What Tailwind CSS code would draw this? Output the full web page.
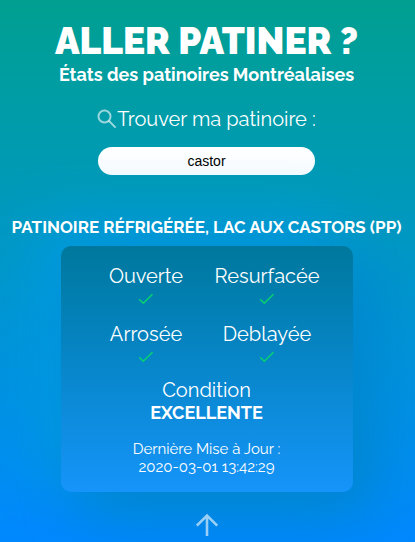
<!DOCTYPE html>
<html lang="fr">
<head>
<meta charset="utf-8">
<meta name="viewport" content="width=device-width, initial-scale=1">
<title>Aller patiner ?</title>
<script src="https://cdn.jsdelivr.net/npm/@tailwindcss/browser@4"></script>
</head>
<body class="min-h-screen overflow-x-hidden bg-linear-to-b from-[#009f90] to-[#0088ff] font-['Raleway','Inter',sans-serif] text-center text-white">
<div class="flex min-h-screen flex-col items-center pt-5 pr-0.5">
  <header>
    <h1 class="text-[37px] leading-[43px] font-black">ALLER PATINER ?</h1>
    <p class="text-lg leading-6 font-bold">États des patinoires Montréalaises</p>
  </header>

  <form class="mt-5 flex flex-col items-center">
    <label for="rink" class="flex items-center text-xl leading-6">
      <svg class="size-5" viewBox="0 0 20 20" fill="none" stroke="#fff" stroke-opacity=".6" stroke-width="2" aria-hidden="true"><circle cx="7.5" cy="7.5" r="6"/><path d="M11.8 11.8 18.6 18.6"/></svg>
      Trouver ma patinoire :
    </label>
    <input id="rink" type="text" value="castor" class="mt-4 h-7 w-[217px] rounded-full bg-linear-to-b from-white to-[#f8fcff] text-center font-['Liberation_Sans',Arial,sans-serif] text-sm text-black outline-none">
  </form>

  <main class="mt-10 flex w-full flex-col items-center">
    <h2 class="relative z-10 text-[17px] leading-6 font-bold whitespace-nowrap">PATINOIRE RÉFRIGÉRÉE, LAC AUX CASTORS (PP)</h2>
    <section class="mt-[7px] flex w-[292px] max-w-full flex-col items-center rounded-[10px] bg-linear-to-b from-[#00789d] to-[#1694fa] pt-4 pb-4 shadow-[20px_20px_60px_#0085cc,-20px_-20px_60px_#009ce4]">
      <dl class="grid grid-cols-2 gap-y-3 text-xl leading-7">
        <div class="flex w-[121px] flex-col items-center"><dt>Ouverte</dt><dd class="flex h-[18px] items-center" aria-label="oui"><svg class="h-3 w-4" viewBox="0 0 16 12" fill="none" stroke="#06d46e" stroke-width="1.5" aria-hidden="true"><path d="M1.2 6.2 5.3 10.3 14.5 1.2"/></svg></dd></div>
        <div class="flex w-[121px] flex-col items-center"><dt>Resurfacée</dt><dd class="flex h-[18px] items-center" aria-label="oui"><svg class="h-3 w-4" viewBox="0 0 16 12" fill="none" stroke="#06d46e" stroke-width="1.5" aria-hidden="true"><path d="M1.2 6.2 5.3 10.3 14.5 1.2"/></svg></dd></div>
        <div class="flex w-[121px] flex-col items-center"><dt>Arrosée</dt><dd class="flex h-[18px] items-center" aria-label="oui"><svg class="h-3 w-4" viewBox="0 0 16 12" fill="none" stroke="#06d46e" stroke-width="1.5" aria-hidden="true"><path d="M1.2 6.2 5.3 10.3 14.5 1.2"/></svg></dd></div>
        <div class="flex w-[121px] flex-col items-center"><dt>Deblayée</dt><dd class="flex h-[18px] items-center" aria-label="oui"><svg class="h-3 w-4" viewBox="0 0 16 12" fill="none" stroke="#06d46e" stroke-width="1.5" aria-hidden="true"><path d="M1.2 6.2 5.3 10.3 14.5 1.2"/></svg></dd></div>
      </dl>
      <p class="mt-3 text-xl leading-6">Condition</p>
      <p class="text-lg leading-[22px] font-bold">EXCELLENTE</p>
      <p class="mt-4 text-[15px] leading-[18px]">Dernière Mise à Jour :<br>2020-03-01 13:42:29</p>
    </section>
  </main>

  <a href="#" aria-label="Haut de page" class="relative mt-5">
    <svg class="size-6" viewBox="0 0 24 24" fill="none" stroke="#fff" stroke-opacity=".6" stroke-width="2.6" aria-hidden="true"><path d="M12 24V4M1.8 13.7 12 3.5 22.2 13.7"/></svg>
  </a>
</div>
</body>
</html>
